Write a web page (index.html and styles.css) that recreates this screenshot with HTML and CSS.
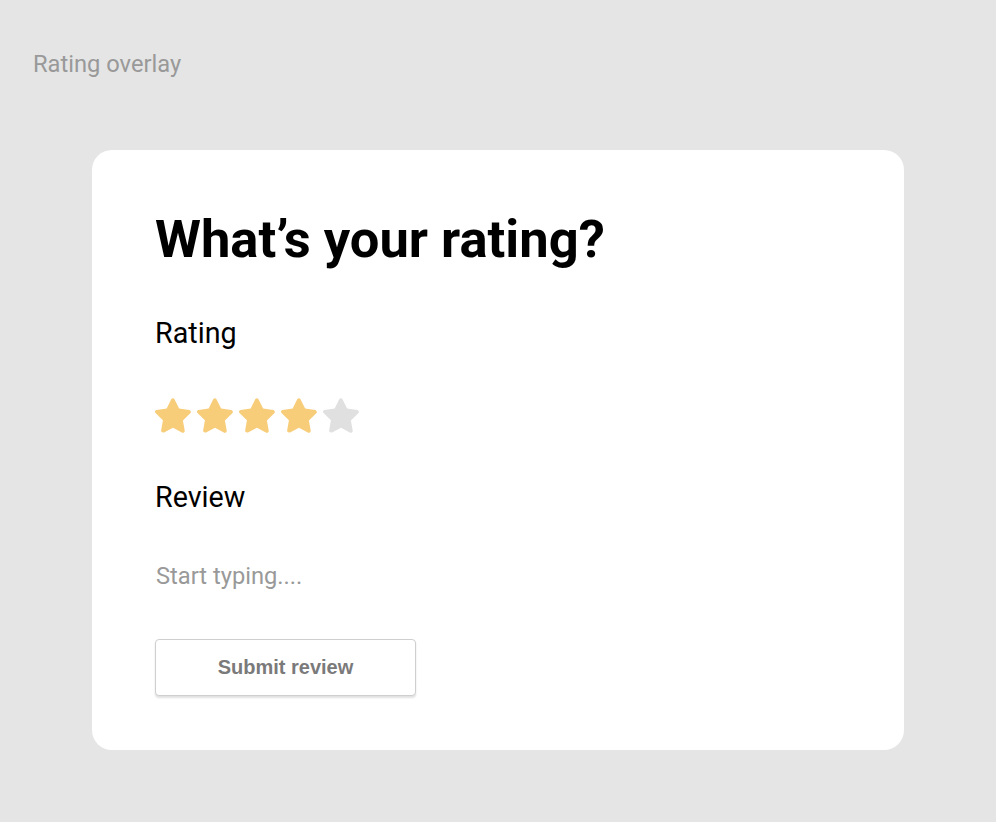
FILE: index.html
```html
<!DOCTYPE html>
<html>
<head>
<meta charset="utf-8">
<link rel="stylesheet" href="styles.css">
</head>
<body>
<div class="page">
  <div class="title">Rating overlay</div>
  <div class="card">
    <h1 class="heading">What’s your rating?</h1>
    <div class="label">Rating</div>
    <div class="stars">
      <svg class="star on" viewBox="2 2 20 20"><path d="M12 2.2c.4 0 .7.2.9.6l2.5 5.1 5.6.8c.9.1 1.2 1.2.6 1.8l-4.1 4 1 5.6c.2.9-.8 1.5-1.6 1.1L12 18.5l-5 2.6c-.8.4-1.7-.3-1.6-1.1l1-5.6-4.1-4c-.6-.6-.3-1.7.6-1.8l5.6-.8 2.5-5.1c.3-.4.6-.6 1-.6z"/></svg>
      <svg class="star on" viewBox="2 2 20 20"><path d="M12 2.2c.4 0 .7.2.9.6l2.5 5.1 5.6.8c.9.1 1.2 1.2.6 1.8l-4.1 4 1 5.6c.2.9-.8 1.5-1.6 1.1L12 18.5l-5 2.6c-.8.4-1.7-.3-1.6-1.1l1-5.6-4.1-4c-.6-.6-.3-1.7.6-1.8l5.6-.8 2.5-5.1c.3-.4.6-.6 1-.6z"/></svg>
      <svg class="star on" viewBox="2 2 20 20"><path d="M12 2.2c.4 0 .7.2.9.6l2.5 5.1 5.6.8c.9.1 1.2 1.2.6 1.8l-4.1 4 1 5.6c.2.9-.8 1.5-1.6 1.1L12 18.5l-5 2.6c-.8.4-1.7-.3-1.6-1.1l1-5.6-4.1-4c-.6-.6-.3-1.7.6-1.8l5.6-.8 2.5-5.1c.3-.4.6-.6 1-.6z"/></svg>
      <svg class="star on" viewBox="2 2 20 20"><path d="M12 2.2c.4 0 .7.2.9.6l2.5 5.1 5.6.8c.9.1 1.2 1.2.6 1.8l-4.1 4 1 5.6c.2.9-.8 1.5-1.6 1.1L12 18.5l-5 2.6c-.8.4-1.7-.3-1.6-1.1l1-5.6-4.1-4c-.6-.6-.3-1.7.6-1.8l5.6-.8 2.5-5.1c.3-.4.6-.6 1-.6z"/></svg>
      <svg class="star off" viewBox="2 2 20 20"><path d="M12 2.2c.4 0 .7.2.9.6l2.5 5.1 5.6.8c.9.1 1.2 1.2.6 1.8l-4.1 4 1 5.6c.2.9-.8 1.5-1.6 1.1L12 18.5l-5 2.6c-.8.4-1.7-.3-1.6-1.1l1-5.6-4.1-4c-.6-.6-.3-1.7.6-1.8l5.6-.8 2.5-5.1c.3-.4.6-.6 1-.6z"/></svg>
    </div>
    <div class="label review">Review</div>
    <div class="placeholder">Start typing....</div>
    <button class="submit">Submit review</button>
  </div>
</div>
</body>
</html>
```
FILE: styles.css
```css
html, body {
  margin: 0;
  padding: 0;
  background: #e5e5e5;
}
.page {
  width: 996px;
  height: 822px;
  padding: 50px 0 0 92px;
  box-sizing: border-box;
  font-family: Roboto, "Liberation Sans", sans-serif;
}
.title {
  margin-left: -59px;
  font-size: 23.7px;
  line-height: 28px;
  color: #999999;
}
.card {
  margin-top: 72px;
  width: 812px;
  height: 600px;
  box-sizing: border-box;
  background: #ffffff;
  border-radius: 20px;
  padding: 58px 64px 0 64px;
  display: flex;
  flex-direction: column;
  align-items: flex-start;
}
.heading {
  margin: 0 0 0 -1px;
  font-size: 52.5px;
  font-weight: 700;
  line-height: 62px;
  color: #000;
}
.label {
  margin-top: 46px;
  font-size: 28.7px;
  line-height: 34px;
  color: #000;
  margin-left: -1px;
}
.stars {
  margin-top: 48px;
  display: flex;
  gap: 6px;
  margin-left: -1px;
}
.star {
  display: block;
  width: 36px;
  height: 36px;
}
.star.on { fill: #f7cd79; }
.star.off { fill: #e0e0e0; }
.label.review {
  margin-top: 46px;
}
.placeholder {
  margin-top: 48px;
  font-size: 23.7px;
  line-height: 28px;
  color: #999999;
}
.submit {
  margin-top: 49px;
  margin-left: -1px;
  width: 261px;
  height: 57px;
  background: #fff;
  border: 1px solid #cfcfcf;
  border-radius: 4px;
  box-shadow: 0 2px 2px rgba(0,0,0,0.12);
  font-family: "Liberation Sans", Arial, sans-serif;
  font-weight: 700;
  font-size: 20px;
  color: #7a7a7a;
  padding: 0;
}
```
